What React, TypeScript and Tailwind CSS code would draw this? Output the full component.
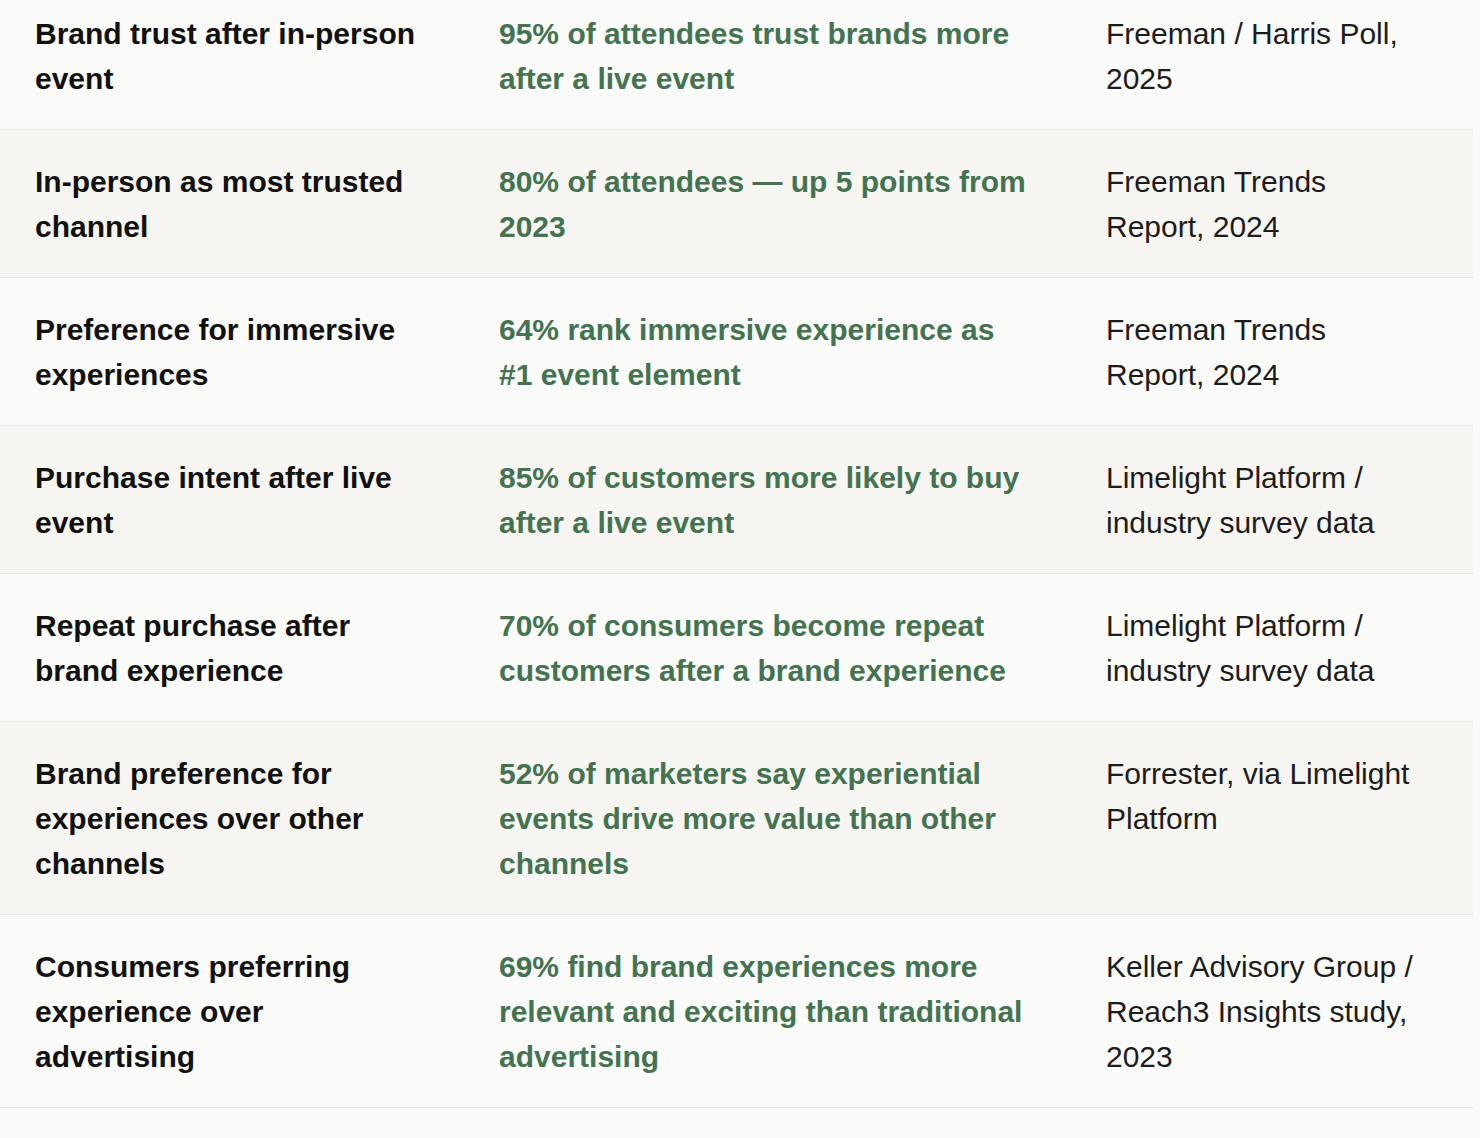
import React from "react";

type Row = { metric: string; stat: string; source: string };

const rows: Row[] = [
  {
    metric: "Brand trust after in-person event",
    stat: "95% of attendees trust brands more after a live event",
    source: "Freeman / Harris Poll, 2025",
  },
  {
    metric: "In-person as most trusted channel",
    stat: "80% of attendees — up 5 points from 2023",
    source: "Freeman Trends Report, 2024",
  },
  {
    metric: "Preference for immersive experiences",
    stat: "64% rank immersive experience as #1 event element",
    source: "Freeman Trends Report, 2024",
  },
  {
    metric: "Purchase intent after live event",
    stat: "85% of customers more likely to buy after a live event",
    source: "Limelight Platform / industry survey data",
  },
  {
    metric: "Repeat purchase after brand experience",
    stat: "70% of consumers become repeat customers after a brand experience",
    source: "Limelight Platform / industry survey data",
  },
  {
    metric: "Brand preference for experiences over other channels",
    stat: "52% of marketers say experiential events drive more value than other channels",
    source: "Forrester, via Limelight Platform",
  },
  {
    metric: "Consumers preferring experience over advertising",
    stat: "69% find brand experiences more relevant and exciting than traditional advertising",
    source: "Keller Advisory Group / Reach3 Insights study, 2023",
  },
];

export default function App() {
  return (
    <div
      className="min-h-screen bg-[#fafaf8] overflow-hidden"
      style={{ fontFamily: '"Liberation Sans", Arial, sans-serif' }}
    >
      {/* table, scrolled a little so the first row is cut */}
      <div className="-mt-[18px] w-[1473px]">
        {rows.map((r, i) => (
          <div
            key={i}
            className={`grid grid-cols-[464px_607px_402px] border-b border-[#e6e3de] text-[30px] leading-[45px] ${
              i % 2 === 0 ? "bg-[#fafaf8]" : "bg-[#f7f5f1]"
            }`}
          >
            <div className="pl-[35px] pr-[44px] pt-[29px] pb-[28px] font-bold text-[#111111]">
              {r.metric}
            </div>
            <div className="pl-[35px] pr-[40px] pt-[29px] pb-[28px] font-bold text-[#437350]">
              {r.stat}
            </div>
            <div className="pl-[35px] pr-[52px] pt-[29px] pb-[28px] text-[#1c1c1c]">
              {r.source}
            </div>
          </div>
        ))}
      </div>
    </div>
  );
}
